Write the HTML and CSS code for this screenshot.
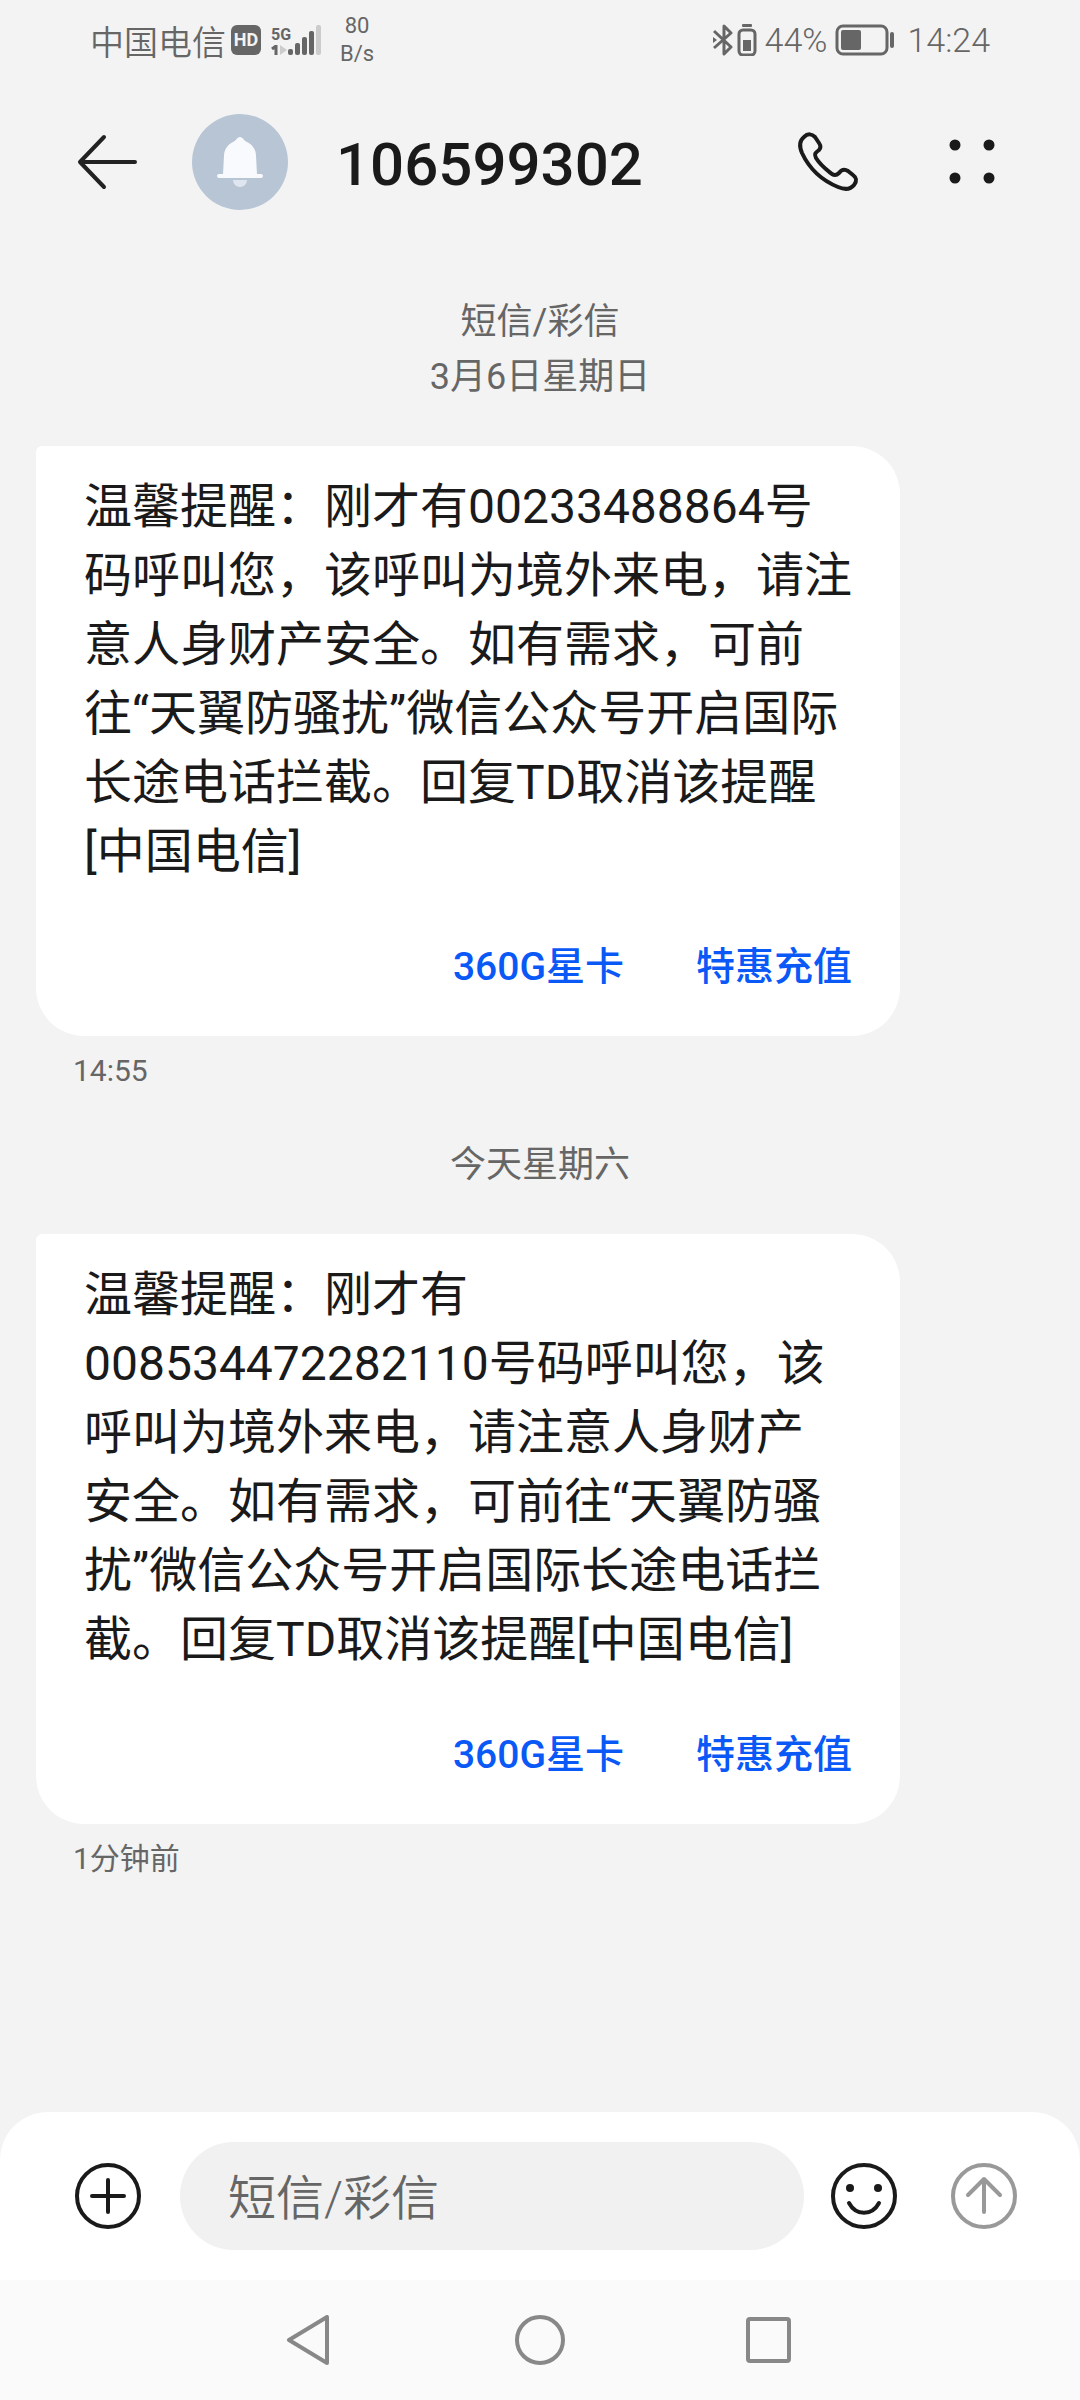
FILE: index.html
```html
<!DOCTYPE html>
<html lang="zh-CN">
<head>
  <meta charset="UTF-8">
  <meta name="viewport" content="width=device-width, initial-scale=1.0">
  <title>106599302</title>
  <link rel="stylesheet" href="styles.css">
</head>
<body>
  <div class="status-bar">
    <div class="status-left">
      <span class="carrier">中国电信</span>
      <span class="hd">HD</span>
      <div class="signal">
        <div class="network">
          <span>5G</span>
          <svg width="16" height="10" viewBox="0 0 16 10">
            <path d="M1 4L5 1V10" fill="none" stroke="#666" stroke-width="3"/>
            <path d="M9 0v10l7-5z" fill="#ccc"/>
          </svg>
        </div>
        <svg width="34" height="30" viewBox="0 0 34 30">
          <g fill="#666">
            <rect x="0" y="24" width="5" height="6" rx="2"/>
            <rect x="7" y="18" width="5" height="12" rx="2"/>
            <rect x="14" y="12" width="5" height="18" rx="2"/>
            <rect x="21" y="6" width="5" height="24" rx="2"/>
          </g>
          <rect x="28" y="0" width="5" height="30" rx="2" fill="#ccc"/>
        </svg>
      </div>
      <div class="speed">
        <span>80</span>
        <span>B/s</span>
      </div>
    </div>
    <div class="status-right">
      <svg width="20" height="32" viewBox="0 0 20 32" fill="none" stroke="#666" stroke-width="3" stroke-linejoin="round">
        <path d="M1 7L18 23L11 30V2L18 9L1 24"/>
        <path d="M0 13v6l4-3z" fill="#666" stroke="none"/>
      </svg>
      <svg class="device-battery" width="20" height="32" viewBox="0 0 20 32">
        <rect x="5" y="0" width="10" height="3" rx="1" fill="#666"/>
        <rect x="2" y="6" width="16" height="25" rx="4" fill="none" stroke="#666" stroke-width="3"/>
        <rect x="6" y="16" width="8" height="11" fill="#666"/>
      </svg>
      <span class="percent">44%</span>
      <svg width="60" height="32" viewBox="0 0 60 32">
        <rect x="2" y="2" width="50" height="28" rx="6" fill="none" stroke="#666" stroke-width="3"/>
        <rect x="6" y="6" width="20" height="20" rx="2" fill="#666"/>
        <rect x="55" y="8" width="4" height="16" rx="2" fill="#666"/>
      </svg>
      <span class="clock">14:24</span>
    </div>
  </div>

  <header class="header">
    <button class="icon-btn" aria-label="返回">
      <svg width="72" height="72" viewBox="0 0 72 72" fill="none" stroke="#222" stroke-width="4" stroke-linecap="round" stroke-linejoin="round">
        <path d="M63 36H9M32 11L8 36l24 25"/>
      </svg>
    </button>
    <div class="avatar">
      <svg width="96" height="96" viewBox="0 0 96 96">
        <path d="M41 66a7 7 0 0 0 14 0z" fill="#dfe6ef"/>
        <path d="M48 23c-3 0-4 4-7 5c-6 3-9 8-9 14l-1 18h-4a2 2 0 0 0 0 4l42 0a2 2 0 0 0 0-4h-4l-1-18c0-6-3-11-9-14c-3-1-4-5-7-5z" fill="#f8fafd"/>
      </svg>
    </div>
    <h1>106599302</h1>
    <button class="icon-btn" aria-label="拨打电话">
      <svg width="72" height="72" viewBox="0 0 72 72" fill="none" stroke="#1a1a1a" stroke-width="4" stroke-linejoin="round">
        <path d="M12 11C16 7 20 8 23 11L27 17C29 20 29 22 27 24C23 27 22 28 24 32C29 40 35 44 40 48C43 50 45 49 47 47C50 43 53 43 56 45L61 49C65 52 65 55 62 59C58 64 53 64 46 61C29 54 17 42 10 27C7 20 7 15 12 11Z"/>
      </svg>
    </button>
    <button class="icon-btn" aria-label="更多">
      <svg width="72" height="72" viewBox="0 0 72 72" fill="#1a1a1a">
        <circle cx="19" cy="19" r="5.5"/>
        <circle cx="53" cy="19" r="5.5"/>
        <circle cx="19" cy="52" r="5.5"/>
        <circle cx="53" cy="52" r="5.5"/>
      </svg>
    </button>
  </header>

  <main class="thread">
    <div class="date">短信/彩信<br>3月6日星期日</div>
    <article class="message">
      <div class="bubble">
        <p>温馨提醒：刚才有00233488864号码呼叫您，该呼叫为境外来电，请注意人身财产安全。如有需求，可前<br>往“天翼防骚扰”微信公众号开启国际长途电话拦截。回复TD取消该提醒[中国电信]</p>
        <div class="links">
          <a href="#">360G星卡</a>
          <a href="#">特惠充值</a>
        </div>
      </div>
      <time>14:55</time>
    </article>

    <div class="date">今天星期六</div>
    <article class="message">
      <div class="bubble">
        <p>温馨提醒：刚才有008534472282110号码呼叫您，该呼叫为境外来电，请注意人身财产<br>安全。如有需求，可前往“天翼防骚扰”微信公众号开启国际长途电话拦截。回复TD取消该提醒[中国电信]</p>
        <div class="links">
          <a href="#">360G星卡</a>
          <a href="#">特惠充值</a>
        </div>
      </div>
      <time>1分钟前</time>
    </article>
  </main>

  <form class="compose">
    <button type="button" class="icon-btn" aria-label="添加">
      <svg width="72" height="72" viewBox="0 0 72 72" fill="none" stroke="#1a1a1a" stroke-width="4" stroke-linecap="round">
        <circle cx="36" cy="36" r="31"/>
        <path d="M20 36h32M36 20v32"/>
      </svg>
    </button>
    <input type="text" placeholder="短信/彩信" aria-label="短信/彩信">
    <button type="button" class="icon-btn" aria-label="表情">
      <svg width="72" height="72" viewBox="0 0 72 72" fill="none" stroke="#1a1a1a" stroke-width="4" stroke-linecap="round">
        <circle cx="36" cy="36" r="31"/>
        <path d="M21 43c7 13 23 13 30 0"/>
        <g fill="#1a1a1a" stroke="none">
          <circle cx="22" cy="28" r="4"/>
          <circle cx="50" cy="28" r="4"/>
        </g>
      </svg>
    </button>
    <button type="button" class="icon-btn send" aria-label="发送">
      <svg width="72" height="72" viewBox="0 0 72 72" fill="none" stroke="#999" stroke-width="4" stroke-linecap="round" stroke-linejoin="round">
        <circle cx="36" cy="36" r="31"/>
        <path d="M20 35l16-16l16 16M36 20v32"/>
      </svg>
    </button>
  </form>

  <nav class="nav-bar">
    <button class="icon-btn" aria-label="后退">
      <svg width="50" height="50" viewBox="0 0 50 50" fill="none" stroke="#888" stroke-width="4" stroke-linejoin="round">
        <path d="M42 2v46L4 25z"/>
      </svg>
    </button>
    <button class="icon-btn" aria-label="主屏幕">
      <svg width="50" height="50" viewBox="0 0 50 50" fill="none" stroke="#888" stroke-width="4">
        <circle cx="25" cy="25" r="23"/>
      </svg>
    </button>
    <button class="icon-btn" aria-label="最近任务">
      <svg width="50" height="50" viewBox="0 0 50 50" fill="none" stroke="#888" stroke-width="4">
        <rect x="3" y="4" width="41" height="42" rx="2"/>
      </svg>
    </button>
  </nav>
</body>
</html>
```
FILE: styles.css
```css
* {
  box-sizing: border-box;
}

body {
  display: flex;
  flex-direction: column;
  min-height: 100vh;
  margin: 0;
  background-color: #f3f3f3;
  color: #1a1a1a;
  font-family: Roboto, "Noto Sans CJK SC", sans-serif;
}

svg {
  display: block;
  flex: none;
}

.icon-btn {
  flex: none;
  padding: 0;
  border: none;
  background: none;
  cursor: pointer;
}

/* status bar */
.status-bar {
  display: flex;
  justify-content: space-between;
  align-items: center;
  height: 80px;
  padding: 0 90px;
  color: #666;
  font-size: 34px;
  font-weight: 350;
}

.status-left, .status-right {
  display: flex;
  align-items: center;
}

.hd {
  width: 30px;
  margin-left: 5px;
  border-radius: 6px;
  background-color: #666;
  color: #f3f3f3;
  font-size: 18px;
  font-weight: 700;
  line-height: 30px;
  text-align: center;
}

.signal {
  display: flex;
  align-items: flex-end;
  margin-left: 10px;
}

.network {
  width: 17px;
  font-size: 16px;
  font-weight: 700;
  line-height: 20px;
}

.speed {
  display: flex;
  flex-direction: column;
  margin-left: 18px;
  font-size: 22px;
  font-weight: 400;
  line-height: 28px;
  text-align: center;
}

.device-battery {
  margin-left: 4px;
}

.percent {
  margin: 0 8px;
}

.clock {
  margin-left: 12px;
}

/* conversation header */
.header {
  display: flex;
  align-items: center;
  height: 164px;
  padding: 0 72px;
}

.avatar {
  width: 96px;
  height: 96px;
  margin: 0 48px;
  border-radius: 50%;
  background-color: #b8c5d4;
}

.header h1 {
  flex: 1;
  margin: 0;
  padding-top: 4px;
  font-size: 60px;
  font-weight: 500;
}

.header h1 + .icon-btn {
  margin-right: 72px;
}

/* messages */
.thread {
  flex: 1;
  padding: 4px 36px 44px;
}

.date {
  margin: 47px 0 41px;
  color: #666;
  font-size: 36px;
  line-height: 55px;
  text-align: center;
}

.bubble {
  width: 864px;
  max-width: 100%;
  padding: 26px 48px 42px;
  border-radius: 6px 48px 48px 48px;
  background-color: #fff;
}

.bubble p {
  margin: 0;
  font-size: 48px;
  line-height: 69px;
}

.links {
  display: flex;
  justify-content: flex-end;
  gap: 72px;
  margin-top: 54px;
}

.links a {
  color: #0a59f7;
  font-size: 39px;
  font-weight: 500;
  line-height: 54px;
  text-decoration: none;
}

.message time {
  display: block;
  margin: 15px 37px 0;
  color: #666;
  font-size: 30px;
  line-height: 40px;
}

/* message input */
.compose {
  display: flex;
  align-items: center;
  padding: 30px 60px 30px 72px;
  border-radius: 48px 48px 0 0;
  background-color: #fff;
}

.compose input {
  flex: 1;
  min-width: 0;
  height: 108px;
  margin: 0 24px 0 36px;
  padding: 4px 48px 0;
  border: none;
  border-radius: 54px;
  background-color: #f1f1f1;
  color: #1a1a1a;
  font-family: inherit;
  font-size: 48px;
  font-weight: 350;
}

.compose input::placeholder {
  color: #666;
}

.compose .send {
  margin-left: 48px;
}

/* system navigation */
.nav-bar {
  display: flex;
  justify-content: center;
  align-items: center;
  gap: 180px;
  height: 120px;
  background-color: #fafafa;
}
```
